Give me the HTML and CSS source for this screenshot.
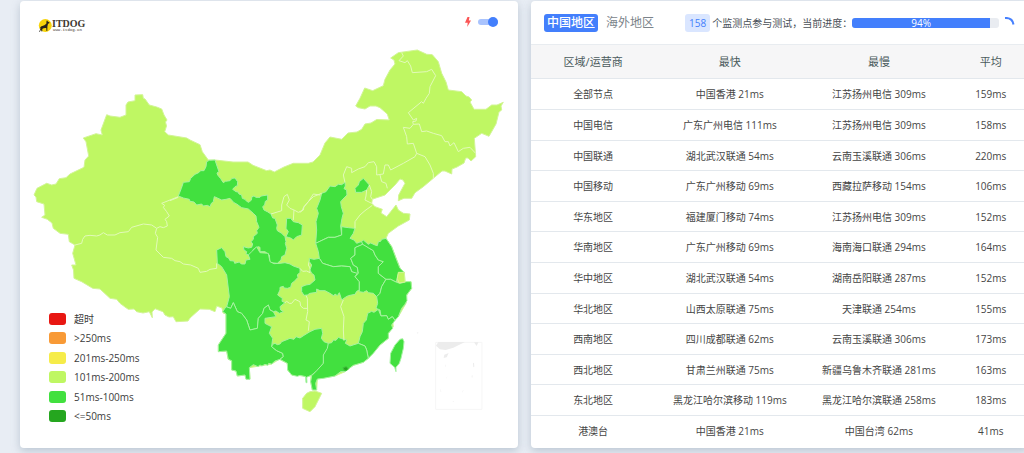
FILE: index.html
```html
<!DOCTYPE html>
<html lang="zh-CN">
<head>
<meta charset="utf-8">
<title>ITDOG</title>
<link rel="stylesheet" href="styles.css">
</head>
<body>
<main class="board">
  <section class="card map-card">
    <svg class="map" viewBox="20 1 498 447" role="img" aria-label="中国地图">
      <path class="mid" d="M135 95L142.700 94.700 143.300 98.300 145 99 149.300 105 153 106 156.700 107 161.700 109 164 115 167 120 165.500 122 166.500 126 164.700 131.700 168.300 135 186.700 138 190 140 200 144.700 202.300 151.700 208.300 160 215 160 233 162 248 162 253 165.300 266.700 170.700 270 170 274.300 172 284 167 293.300 163.300 308.300 163.300 313 162 320 155 325 143 330 137 341.700 139.300 348 133 357 132 361.700 129.300 365 124 371 123 376.700 119.500 389.300 120 387.300 114 380 107.700 376 106 370 106 365 109 358.300 107.700 355.700 106 360 98.300 364.700 88 372.700 90.700 383.300 85.700 385 79.300 390 70 395 64 394 60 390.700 58 398.300 52.700 417.300 50 426.700 54.300 432.300 54.700 438.300 61.700 441.700 73.300 446 82 448.300 90 461.700 91.700 466 96 469 97 471.700 100 470 102 474 109.300 486 109.300 491.700 105 497 105 503.300 102.300 501 106 501.700 110 499 112 496 124 489 136.300 481.700 133.300 474.300 138.300 475.700 156.700 471 161 468 158 465.700 158 464 163 457 167 452 169 451.700 174 445 171 442 171 433.300 178.300 423.300 186.700 415 192.700 411.700 198.300 404 198.300 398.300 200.700 398.700 195 405 183.300 403 180 400 179 395 185 390 190 385 195 376.700 197.700 372.300 199.300 371.700 203.300 375 206.700 382.300 209.300 381 213 386.700 216.700 390.700 211.700 396 205 398.300 210 403.300 213.300 410 214 409.300 220 398.300 226 388.300 233.300 386 238.300 391.700 246.700 400 268 404.300 272.300 405 282 411 281.700 411.700 288.300 406.700 295 406 303.300 398.300 316.700 392.700 321.700 393.300 326.700 388.300 333.300 388.300 338.300 380 345 368.300 358.300 363.300 362.300 353.300 365.300 345 371.700 335 376 317.300 379 316.700 390 312.300 390 310.700 381.700 311 376 304 376 291.700 375 287.700 370 287.300 363.300 279.300 359.300 271.700 364 249.300 367.700 250 379 246 379 245 375 237.300 376 236 371 231.700 370 231.700 360.700 228 359 226.700 351 218.300 351.700 218.300 345 226 333.300 226 314 223 313 222 308 216.700 306 215 311.700 209.300 309.300 200 309 190 318 188 321 176 321.700 173.300 316.700 169 317 165 315 163 311.700 155 308.700 152 312 152.300 317.700 149.300 311.700 143 313 136.700 311.700 134 309 128.300 309.300 125 307 120 303.300 116.700 299.300 110 298.300 100 289 92.700 288.300 81.700 281.700 74 278.300 73.500 270 71.700 265 76 265 72.700 253.300 75 245 69.300 241.700 68.300 234.300 60 233.300 53.300 228.300 52 223 47.300 219.300 41.700 217.300 45 215 44 204 36.700 201.700 36 197 34 195 37 188.300 46.700 183.300 51.700 185 56 184 59.300 178.700 66 177.700 70 174 84 167.300 85 160 88.700 156 86 141.700 83.300 138 96 133.700 102.300 135 101 130 106.700 114.700 110 116 120 117.300 126 115 126 105 128 102 135 100.700Z"/>
      <g transform="translate(20 220) scale(.33333)">
        <path class="line" d="M165 75L185 70 188 58 195 48 210 46 230 48 240 45 250 38 262 45 285 45 300 38 325 35 335 22 370 12 395 15 410 25 420 20 430 23 442 18 440 5 435 -2 448 -12 440 -25 430 -38 434 -44 425 -50 475 -70M410 25L406 40 413 52 408 90 430 112 455 115 465 122 480 125 490 132 512 135 535 145 540 157 560 154 570 148 590 145 590 130"/>
      </g>
      <g transform="translate(170 140) scale(.33333)">
        <path class="fast" d="M110 65L118 61 135 60 140 75 147 95 141 99 143 105 152 116 160 128 166 124 180 122 186 115 195 114 203 125 202 137 195 140 188 148 198 155 204 156 207 162 215 165 217 175 225 178 230 184 237 187 244 180 246 170 252 168 258 172 270 172 274 168 293 165 293 180 286 184 284 195 278 200 282 210 292 215 303 222 308 234 315 235 322 255 320 265 322 272 335 280 345 290 348 305 346 310 350 325 345 345 335 350 333 360 322 370 300 368 298 345 285 335 270 335 270 322 265 320 250 328 248 340 240 352 235 345 228 342 230 335 222 330 220 320 235 324 245 322 248 312 243 305 250 298 250 290 262 280 260 272 267 262 260 245 258 228 250 220 235 207 215 203 200 192 192 188 180 175 168 178 155 180 133 170 130 185 124 190 120 200 112 196 100 198 95 192 80 195 72 186 60 184 58 178 40 174 25 168 34 145 40 127 58 125 62 115 75 103 86 98 92 92 102 92 108 80Z"/>
        <path class="fast" d="M350 235L362 235 370 245 385 248 397 255 395 285 380 290 370 300 364 295 355 292 348 290 355 275 348 265Z"/>
        <path class="line" d="M0 182L25 172M303 222L335 212 335 195 342 170 352 163 358 180 350 195 360 205 372 210 370 240M372 210L385 217 400 210 402 200 415 185 430 162 450 165"/>
      </g>
      <g transform="translate(200 240) scale(.33333)">
        <path class="fast" d="M50 30L65 23 75 35 78 50 86 54 90 62 102 63 104 70 118 66 124 72 135 72 138 60 150 58 145 45 155 35 170 20 180 38 205 40 210 65 222 71 240 70 255 68 270 72 280 78 300 85 300 97 292 105 294 112 283 124 275 130 272 142 262 145 252 144 250 139 240 142 240 150 233 165 247 175 246 184 255 188 240 200 242 210 250 215 238 220 228 213 220 215 210 210 205 195 192 205 188 220 175 235 172 265 150 270 140 240 125 220 112 215 100 188 92 205 80 200 88 170 80 105 65 80 52 70Z"/>
        <path class="fast" d="M68 215L78 200 92 205 100 188 112 215 125 220 140 240 150 270 172 265 175 235 188 220 192 205 205 195 210 210 220 215 228 230 195 235 195 250 206 256 215 260 208 280 218 295 215 320 230 332 248 340 250 350 240 358 225 363 215 372 206 370 204 376 195 373 186 378 180 375 174 380 160 374 148 383 150 418 138 418 135 405 112 408 108 393 95 390 95 362 85 358 80 333 55 335 55 315 78 280 78 222Z"/>
        <path class="fast" d="M215 320L218 313 225 310 232 314 240 312 245 305 258 300 270 295 282 298 288 290 300 294 312 286 330 275 345 268 365 265 368 280 364 295 372 305 385 310 385 325 372 345 370 370 360 382 352 392 335 405 320 412 321 428 318 428 317 410 300 406 292 409 275 405 263 390 262 370 240 358 250 350 248 340 230 332Z"/>
        <path class="line" d="M300 85L308 94 320 93 330 98 330 84 325 75 328 62 333 55M255 188L260 184 268 190 275 190 285 178 300 185 302 198 310 205 323 205M305 140L315 160 322 175 323 215 318 240 328 245 325 272"/>
      </g>
      <g transform="translate(300 150) scale(.33333)">
        <path class="fast" d="M65 130L78 125 90 108 105 110 115 103 125 104 135 97 136 108 132 116 140 120 141 135 132 144 122 155 124 170 130 190 126 205 122 228 125 255 105 262 85 262 47 280 50 240 48 215 55 190 50 175 60 150Z"/>
        <path class="fast" d="M47 280L85 262 105 262 125 255 125 230 145 233 165 235 160 250 150 265 162 270 170 280 180 276 190 275 185 285 165 293 165 315 152 325 160 345 172 352 175 375 155 365 150 350 125 348 100 350 68 340 58 325 55 305Z"/>
        <path class="fast" d="M28 325L42 328 58 325 68 340 100 350 125 348 150 350 155 365 172 370 165 380 178 395 178 420 170 424 165 433 145 437 136 442 125 450 118 428 112 437 105 432 102 438 90 430 75 422 60 422 50 417 50 427 30 430 22 435 12 436 5 425 5 410 18 405 30 403 45 390 42 375 35 370 30 360 35 345 28 335Z"/>
        <path class="fast" d="M165 293L190 282 205 293 220 302 225 315 235 330 250 335 235 350 235 370 258 388 245 410 240 430 230 440 220 430 205 428 200 422 190 427 178 425 178 395 165 380 175 370 172 352 160 345 152 325 165 315Z"/>
        <path class="fast" d="M185 275L190 270 205 283 212 279 225 285 232 287 235 275 242 274 245 268 258 265 275 290 290 330 300 355 313 367 295 372 290 390 290 397 272 388 258 388 235 370 235 350 250 335 235 330 225 315 220 302 205 293 188 283Z"/>
        <path class="fast" d="M230 440L240 430 245 410 258 388 272 388 290 397 300 400 320 395 333 395 335 415 320 435 321 452 314 464 305 475 295 500 285 511 277 500 265 508 260 497 243 498 240 480 228 475 233 460Z"/>
        <path class="fast" d="M175 580L180 560 187 545 190 520 199 510 203 490 215 484 222 487 235 478 243 498 260 497 265 508 277 500 285 511 275 525 278 535 265 550 265 565 240 585 220 610 205 625 200 600 195 588Z"/>
        <path class="fast" d="M85 580L95 578 100 570 108 571 115 562 125 566 140 570 136 580 150 588 162 584 175 580 195 588 200 600 205 625 190 637 160 646 135 665 122 665 105 678 70 685 52 687 47 700 50 720 37 720 32 695 35 677 50 662 70 640 70 615 82 595Z"/>
        <path class="fast" d="M165 115L175 105 178 95 190 85 208 105 200 120 185 127 167 127Z"/>
        <path class="fast" d="M300 568L308 566 312 575 310 595 303 625 298 640 288 652 288 665 284 652 270 640 272 610 285 585Z"/>
        <path class="mid" d="M20 730L30 725 45 723 65 730 50 760 45 770 30 785 8 775 8 745Z"/>
        <path class="mid" d="M295 367L313 367 315 396 297 399 292 385Z"/>
        <path class="best" d="M129 653L139 650 145 657 138 662 132 660Z"/>
        <path class="line" d="M0 188L8 180 10 173 25 155 40 140 65 130M135 97L130 75 140 50 155 55 155 68 175 57 195 50 205 38 222 35 230 50 230 75 250 72 255 45 265 45 272 60 310 40 345 20 350 10M208 105L215 125 212 140 217 148M200 120L198 138 195 150 215 160M217 166L195 182 180 195 165 215 165 235M130 450L122 470 132 500 130 540 132 572M240 75L245 95 258 100 262 115"/>
      </g>
      <g transform="translate(330 40) scale(.33333)">
        <path class="line" d="M215 38L220 48 207 62 225 68 232 62 242 78 247 98 290 95 305 88 317 107 300 140 298 160 288 175 280 190 275 185 235 218 250 240 260 235 258 243 248 245 250 253 268 252 275 275 290 273 310 280 335 287 345 305 355 305 360 318 372 308 385 335 400 325 420 322 437 340M250 253L240 265 220 262 230 290 232 312 250 310 260 340 285 350 300 375 310 400 310 415"/>
      </g>
      <g transform="translate(300 260) scale(.33333)" class="inset">
        <path class="frame" d="M407 247H546V448H407Z"/>
        <path d="M415 246H495L460 263 437 270 420 268 408 257ZM522 247H535L530 258ZM433 284L446 279 440 292 431 294ZM350 218L355 217 354 221ZM519 310L522 308 523 320 520 322ZM436 312L437 322 435 318ZM515 347L518 346 516 356ZM442 348L438 356 440 354ZM420 385L424 396 422 395ZM488 392L491 390 486 399ZM459 423L462 424 458 427Z"/>
      </g>
    </svg>
    <a class="logo" href="#" aria-label="ITDOG">
      <svg class="dog" viewBox="0 0 14 14" aria-hidden="true">
        <circle cx="7.300" cy="6.500" r="6.500" fill="#f7d40b"/>
        <path fill="#26231b" d="M1.500 9.500L3 7.500 6.400 6.300 8.300 4.700 8.500 2.300 9 1.200 9.800 2.600 11.600 3.400 11.300 4.300 10 4.700 9.400 7.500 9.300 12 8.500 12 8.200 8.900 7 8.900 4.800 9.400 4.200 10.500 4.400 12.300 3.500 12.600 3 10.600 1.800 13 1.200 12.800 2.400 9.800 2.400 8.700Z"/>
      </svg>
      <span class="brand"><span class="brand-name">ITDOG</span><span class="brand-url">www.itdog.cn</span></span>
    </a>
    <label class="speed">
      <svg class="bolt" viewBox="0 0 6 10" aria-hidden="true"><path fill="#fb5555" d="M2.500 0H4.500L3.800 3.600H6L2.200 10 2.700 5.700H0Z"/></svg>
      <input class="switch" type="checkbox" role="switch" aria-label="快速模式" checked>
    </label>
    <ul class="legend">
      <li><i class="swatch timeout"></i>超时</li>
      <li><i class="swatch slow"></i>&gt;250ms</li>
      <li><i class="swatch fair"></i>201ms-250ms</li>
      <li><i class="swatch good"></i>101ms-200ms</li>
      <li><i class="swatch quick"></i>51ms-100ms</li>
      <li><i class="swatch top"></i>&lt;=50ms</li>
    </ul>
  </section>

  <section class="card data-card">
    <header class="toolbar">
      <button class="tab active" type="button">中国地区</button>
      <button class="tab" type="button">海外地区</button>
      <span class="count">158</span>
      <span class="status">个监测点参与测试，当前进度：</span>
      <div class="progress" role="progressbar" aria-valuenow="94" aria-valuemin="0" aria-valuemax="100"><div class="bar" style="width:94%">94%</div></div>
      <svg class="spinner" viewBox="0 0 12 12" aria-hidden="true"><path d="M2 1Q9.500 .5 10.500 7.500" fill="none" stroke="#4680fe" stroke-width="2"/></svg>
    </header>
    <table class="results">
      <thead><tr><th class="region">区域/运营商</th><th class="node">最快</th><th class="node">最慢</th><th>平均</th></tr></thead>
      <tbody>
        <tr><td>全部节点</td><td>中国香港 21ms</td><td>江苏扬州电信 309ms</td><td>159ms</td></tr>
        <tr><td>中国电信</td><td>广东广州电信 111ms</td><td>江苏扬州电信 309ms</td><td>158ms</td></tr>
        <tr><td>中国联通</td><td>湖北武汉联通 54ms</td><td>云南玉溪联通 306ms</td><td>220ms</td></tr>
        <tr><td>中国移动</td><td>广东广州移动 69ms</td><td>西藏拉萨移动 154ms</td><td>106ms</td></tr>
        <tr><td>华东地区</td><td>福建厦门移动 74ms</td><td>江苏扬州电信 309ms</td><td>152ms</td></tr>
        <tr><td>华南地区</td><td>广东广州移动 69ms</td><td>海南海口联通 294ms</td><td>164ms</td></tr>
        <tr><td>华中地区</td><td>湖北武汉联通 54ms</td><td>湖南岳阳联通 287ms</td><td>152ms</td></tr>
        <tr><td>华北地区</td><td>山西太原联通 75ms</td><td>天津联通 254ms</td><td>155ms</td></tr>
        <tr><td>西南地区</td><td>四川成都联通 62ms</td><td>云南玉溪联通 306ms</td><td>173ms</td></tr>
        <tr><td>西北地区</td><td>甘肃兰州联通 75ms</td><td>新疆乌鲁木齐联通 281ms</td><td>163ms</td></tr>
        <tr><td>东北地区</td><td>黑龙江哈尔滨移动 119ms</td><td>黑龙江哈尔滨联通 258ms</td><td>183ms</td></tr>
        <tr><td>港澳台</td><td>中国香港 21ms</td><td>中国台湾 62ms</td><td>41ms</td></tr>
      </tbody>
    </table>
  </section>
</main>
</body>
</html>
```
FILE: styles.css
```css
* { box-sizing: border-box; }
body {
  margin: 0;
  overflow: hidden;
  min-height: 100vh;
  background: #e8edf4;
  color: #495057;
  font: 10px/16px "Open Sans", "Noto Sans CJK SC", sans-serif;
}
.board {
  display: flex;
  gap: 13px;
  padding: 1px 0 5px 20px;
  margin-right: -4px;
}
.card {
  position: relative;
  min-width: 0;
  background: #fff;
  border-radius: 4px;
  box-shadow: 0 3px 8px rgba(120, 140, 160, .4);
}
.map-card { flex: 498; }
.data-card { flex: 497; }

.map { display: block; width: 100%; }
.map path { stroke-linejoin: round; vector-effect: non-scaling-stroke; }
.map .mid { fill: #bff763; stroke: #d2f596; stroke-width: 1px; }
.map .fast { fill: #42e03f; stroke: #a5f3a0; stroke-width: 1px; }
.map .best { fill: #25a61f; stroke: #42c03f; stroke-width: 1px; }
.map .line { fill: none; stroke: #e2fab9; stroke-width: 1px; }
.inset path { fill: #ececec; }
.inset .frame { fill: none; stroke: #f6f6f6; stroke-width: 1px; }

.logo {
  position: absolute;
  left: 18px;
  top: 18px;
  display: flex;
  color: #40382f;
  text-decoration: none;
}
.dog { width: 14px; height: 14px; }
.brand { display: flex; flex-direction: column; }
.brand-name { font: bold 10px/9px "Liberation Serif", serif; }
.brand-url { padding-left: 1px; font: bold 4px/4px "Liberation Mono", monospace; color: #77706a; }

.speed {
  position: absolute;
  right: 20px;
  top: 16px;
  display: flex;
  align-items: center;
  gap: 7px;
}
.bolt { width: 6px; height: 10px; }
.switch {
  appearance: none;
  display: flex;
  align-items: center;
  justify-content: flex-end;
  width: 20px;
  height: 6px;
  margin: 0;
  border-radius: 3px;
  background: #a9c3fd;
}
.switch::before {
  content: "";
  width: 10px;
  height: 10px;
  border-radius: 50%;
  background: #437ffc;
}

.legend {
  position: absolute;
  left: 29px;
  bottom: 24px;
  display: flex;
  flex-direction: column;
  justify-content: space-between;
  height: 113px;
  margin: 0;
  padding: 0;
  list-style: none;
  color: #3c3c3c;
}
.legend li { display: flex; align-items: center; gap: 8px; height: 16px; line-height: 14px; }
.swatch { width: 17px; height: 12px; border-radius: 3px; }
.timeout { background: #e81712; }
.slow { background: #f89a36; }
.fair { background: #f6ec49; }
.good { background: #bff763; }
.quick { background: #42e03f; }
.top { background: #25a61f; }

.toolbar {
  display: flex;
  align-items: center;
  height: 43px;
  padding: 0 13px 0 13px;
}
.tab {
  height: 18px;
  padding: 0 3px;
  border: 0;
  border-radius: 3px;
  background: none;
  color: #7b838a;
  font: 12px/18px "Open Sans", "Noto Sans CJK SC", sans-serif;
}
.tab + .tab { margin-left: 5px; }
.tab.active { background: #437ffc; color: #fff; font-weight: 500; }
.count {
  margin-left: 28px;
  padding: 0 4px;
  border-radius: 3px;
  background: #dae6ff;
  color: #437ffc;
  line-height: 18px;
}
.status { margin-left: 2px; white-space: nowrap; }
.progress {
  flex: 1;
  height: 10px;
  border-radius: 3px;
  background: #e9ecf1;
}
.bar {
  height: 10px;
  border-radius: 3px 0 0 3px;
  background: #437ffc;
  color: #fff;
  line-height: 10px;
  text-align: center;
}
.spinner { width: 12px; height: 12px; margin-left: 4px; }

.results { width: 100%; table-layout: fixed; border-collapse: collapse; text-align: center; }
.results th {
  height: 34px;
  padding: 0;
  border-top: 1px solid #e8ecf0;
  background: #f6f6f7;
  color: #4a5a5c;
  font-size: 11px;
  font-weight: 400;
}
.results td { padding: 7px 0; border-top: 1px solid #e3e8ed; color: #454545; white-space: nowrap; }
.results tr:nth-child(5n) td,
.results tr:nth-child(5n-2) td { padding-bottom: 6px; }
.region { width: 25%; }
.node { width: 30%; }
```
